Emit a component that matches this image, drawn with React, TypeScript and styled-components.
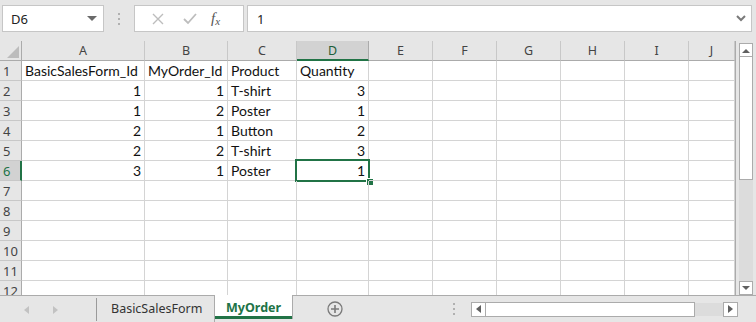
import React from "react"
import styled, { createGlobalStyle } from "styled-components"

const GREEN = "#217346"
const GRID = "#d4d4d4"
const COLS = [22, 123, 83, 69, 72, 64, 64, 64, 64, 64, 46]
const LETTERS = ["A", "B", "C", "D", "E", "F", "G", "H", "I", "J"]

type Cell = string | number | null
const DATA: Cell[][] = [
  ["BasicSalesForm_Id", "MyOrder_Id", "Product", "Quantity"],
  [1, 1, "T-shirt", 3],
  [1, 2, "Poster", 1],
  [2, 1, "Button", 2],
  [2, 2, "T-shirt", 3],
  [3, 1, "Poster", 1],
]

const GlobalStyle = createGlobalStyle`
  html, body {
    margin: 0;
    padding: 0;
    background: #e6e6e6;
    overflow: hidden;
  }
  * { box-sizing: border-box; }
`

const App: React.FC = () => {
  const rows = Array.from({ length: 12 }, (_, i) => DATA[i] || [])

  return (
    <Page>
      <GlobalStyle />
      <FormulaBar>
        <NameBox>
          <span>D6</span>
          <DropCaret />
        </NameBox>
        <Grip>
          <i />
          <i />
          <i />
        </Grip>
        <FxBox>
          <FxIcon>
            <svg width="12" height="12" viewBox="0 0 12 12">
              <path d="M1 1 L11 11 M11 1 L1 11" stroke="#bdbdbd" strokeWidth="1.4" fill="none" />
            </svg>
          </FxIcon>
          <FxIcon>
            <svg width="14" height="12" viewBox="0 0 14 12">
              <path d="M1 6 L5 10 L13 1" stroke="#bdbdbd" strokeWidth="1.8" fill="none" />
            </svg>
          </FxIcon>
          <FxLabel>
            f<sub>x</sub>
          </FxLabel>
        </FxBox>
        <FormulaInput>
          <span>1</span>
          <svg width="10" height="8" viewBox="0 0 10 8">
            <path d="M1 1 L5 5 L9 1" stroke="#7a7a7a" strokeWidth="2" fill="none" />
          </svg>
        </FormulaInput>
      </FormulaBar>

      <SheetArea>
        <Grid>
          <GridRow>
            <Corner>
              <svg width="12" height="12" viewBox="0 0 12 12">
                <path d="M12 0 L12 12 L0 12 Z" fill="#bcbcbc" />
              </svg>
            </Corner>
            {LETTERS.map((l, i) => (
              <ColHead key={l} $active={i === 3}>
                {l}
              </ColHead>
            ))}
          </GridRow>
          {rows.map((r, ri) => (
            <GridRow key={ri}>
              <RowHead $active={ri === 5}>{ri + 1}</RowHead>
              {LETTERS.map((l, ci) => {
                const v = r[ci]
                const isNum = typeof v === "number"
                const selected = ri === 5 && ci === 3
                return (
                  <DataCell key={l} $num={isNum}>
                    {v ?? ""}
                    {selected && (
                      <Selection>
                        <FillHandle />
                      </Selection>
                    )}
                  </DataCell>
                )
              })}
            </GridRow>
          ))}
        </Grid>
        <VScroll>
          <ScrollBtn>
            <svg width="8" height="5" viewBox="0 0 8 5">
              <path d="M0 5 L4 1 L8 5 Z" fill="#606060" />
            </svg>
          </ScrollBtn>
          <VThumb />
          <VTrack />
          <ScrollBtn>
            <svg width="8" height="5" viewBox="0 0 8 5">
              <path d="M0 0 L8 0 L4 4 Z" fill="#606060" />
            </svg>
          </ScrollBtn>
        </VScroll>
      </SheetArea>

      <TabBar>
        <NavArrows>
          <svg width="5" height="8" viewBox="0 0 5 8">
            <path d="M5 0 L5 8 L0 4 Z" fill="#c2c2c2" />
          </svg>
          <svg width="5" height="8" viewBox="0 0 5 8">
            <path d="M0 0 L0 8 L5 4 Z" fill="#c2c2c2" />
          </svg>
        </NavArrows>
        <Tabs>
          <Tab>BasicSalesForm</Tab>
          <Tab $active>MyOrder</Tab>
        </Tabs>
        <AddSheet>
          <svg width="16" height="16" viewBox="0 0 16 16">
            <circle cx="8" cy="8" r="7" stroke="#7a7a7a" strokeWidth="1.3" fill="none" />
            <path d="M8 4 V12 M4 8 H12" stroke="#7a7a7a" strokeWidth="1.6" />
          </svg>
        </AddSheet>
        <TabGrip>
          <i />
          <i />
          <i />
        </TabGrip>
        <HScroll>
          <HBtn>
            <svg width="5" height="8" viewBox="0 0 5 8">
              <path d="M5 0 L5 8 L0 4 Z" fill="#606060" />
            </svg>
          </HBtn>
          <HThumb />
          <HTrack />
          <HBtn>
            <svg width="5" height="8" viewBox="0 0 5 8">
              <path d="M0 0 L0 8 L5 4 Z" fill="#606060" />
            </svg>
          </HBtn>
        </HScroll>
      </TabBar>
    </Page>
  )
}

const Page = styled.div`
  width: 756px;
  height: 322px;
  display: flex;
  flex-direction: column;
  background: #e6e6e6;
  font-family: "Noto Sans", "Open Sans", sans-serif;
  color: #262626;
`

const FormulaBar = styled.div`
  height: 41px;
  display: flex;
  align-items: flex-start;
  padding: 5px 4px 0 2px;
`

const Box = styled.div`
  height: 27px;
  background: #fff;
  border: 1px solid #c6c6c6;
  display: flex;
  align-items: center;
`

const NameBox = styled(Box)`
  width: 102px;
  padding: 0 6px 0 8px;
  justify-content: space-between;
  font-size: 13px;
  color: #222;
`

const DropCaret = styled.span`
  width: 0;
  height: 0;
  border-left: 5px solid transparent;
  border-right: 5px solid transparent;
  border-top: 5px solid #6a6a6a;
`

const Grip = styled.div`
  width: 30px;
  height: 27px;
  display: flex;
  flex-direction: column;
  align-items: center;
  justify-content: center;
  gap: 3px;
  i {
    width: 2px;
    height: 2px;
    background: #b0b0b0;
  }
`

const FxBox = styled(Box)`
  width: 110px;
  padding: 0 6px 0 12px;
  justify-content: space-between;
`

const FxIcon = styled.span`
  width: 22px;
  display: flex;
  justify-content: center;
`

const FxLabel = styled.span`
  font-family: "Liberation Serif", serif;
  font-style: italic;
  font-size: 15px;
  color: #555;
  width: 26px;
  sub {
    font-size: 11px;
    vertical-align: -2px;
  }
`

const FormulaInput = styled(Box)`
  flex: 1;
  margin-left: 3px;
  padding: 0 5px 0 9px;
  justify-content: space-between;
  font-size: 13px;
  color: #222;
`

const SheetArea = styled.div`
  height: 254px;
  display: flex;
  align-items: stretch;
`

const Grid = styled.div`
  width: 736px;
  background: #fff;
  border-right: 1px solid #ababab;
  overflow: hidden;
`

const GridRow = styled.div`
  display: grid;
  grid-template-columns: ${COLS.map(c => `${c}px`).join(" ")};
  height: 20px;
`

const HeadBase = styled.div`
  font-family: "Noto Sans", sans-serif;
  font-size: 12.5px;
  color: #444;
  display: flex;
  align-items: center;
  justify-content: center;
`

const Corner = styled.div`
  background: #e6e6e6;
  border-right: 1px solid #ababab;
  border-bottom: 1px solid #ababab;
  display: flex;
  align-items: flex-end;
  justify-content: flex-end;
  padding: 0 2px 2px 0;
`

const ColHead = styled(HeadBase)<{ $active?: boolean }>`
  background: ${p => (p.$active ? "#d2d2d2" : "#e6e6e6")};
  border-right: 1px solid ${p => (p.$active ? "#ababab" : "#c8c8c8")};
  border-bottom: ${p => (p.$active ? `2px solid ${GREEN}` : "1px solid #ababab")};
  color: ${p => (p.$active ? "#1e5e3a" : "#444")};
  padding-top: ${p => (p.$active ? "1px" : "0")};
`

const RowHead = styled(HeadBase)<{ $active?: boolean }>`
  background: ${p => (p.$active ? "#d2d2d2" : "#e6e6e6")};
  border-right: ${p => (p.$active ? `2px solid ${GREEN}` : "1px solid #ababab")};
  border-bottom: 1px solid #c8c8c8;
  color: ${p => (p.$active ? GREEN : "#444")};
  justify-content: flex-start;
  padding-left: 3px;
  font-size: 13px;
`

const DataCell = styled.div<{ $num?: boolean }>`
  position: relative;
  border-right: 1px solid ${GRID};
  border-bottom: 1px solid ${GRID};
  font-family: "Lato", "Open Sans", sans-serif;
  font-size: 14px;
  color: #111;
  display: flex;
  align-items: flex-end;
  padding: 0 3px 1px 3px;
  white-space: nowrap;
  justify-content: ${p => (p.$num ? "flex-end" : "flex-start")};
`

const Selection = styled.div`
  position: absolute;
  left: -2px;
  top: -2px;
  right: -2px;
  bottom: -2px;
  border: 2px solid ${GREEN};
  pointer-events: none;
`

const FillHandle = styled.div`
  position: absolute;
  right: -5px;
  bottom: -5px;
  width: 7px;
  height: 7px;
  background: ${GREEN};
  border: 1px solid #fff;
  border-right: none;
  border-bottom: none;
`

const VScroll = styled.div`
  width: 14px;
  margin-left: 3px;
  padding-top: 2px;
  display: flex;
  flex-direction: column;
`

const ScrollBtn = styled.div`
  height: 14px;
  background: #fff;
  border: 1px solid #ababab;
  display: flex;
  align-items: center;
  justify-content: center;
`

const VThumb = styled.div`
  height: 123px;
  background: #fff;
  border: 1px solid #ababab;
  border-top: none;
`

const VTrack = styled.div`
  flex: 1;
  background: #dcdcdc;
`

const TabBar = styled.div`
  height: 27px;
  display: flex;
  align-items: stretch;
  border-top: 1px solid #ababab;
`

const NavArrows = styled.div`
  width: 97px;
  display: flex;
  align-items: center;
  padding-left: 24px;
  gap: 24px;
  border-right: 1px solid #9a9a9a;
  margin: 2px 0 1px;
`

const Tabs = styled.div`
  display: flex;
  align-items: stretch;
  margin-top: -1px;
`

const Tab = styled.div<{ $active?: boolean }>`
  padding: 0 ${p => (p.$active ? "11px" : "14px")};
  display: flex;
  align-items: center;
  font-size: 12.5px;
  color: ${p => (p.$active ? GREEN : "#333")};
  font-weight: ${p => (p.$active ? 700 : 400)};
  background: ${p => (p.$active ? "#fff" : "transparent")};
  border-right: 1px solid #ababab;
  box-shadow: ${p => (p.$active ? `inset 0 -3px 0 ${GREEN}` : "none")};
  margin-bottom: ${p => (p.$active ? "3px" : "0")};
  width: ${p => (p.$active ? "78px" : "118px")};
`

const AddSheet = styled.div`
  width: 84px;
  display: flex;
  align-items: center;
  justify-content: center;
`

const TabGrip = styled(Grip)`
  width: 36px;
  height: auto;
  margin-left: 59px;
`

const HScroll = styled.div`
  display: flex;
  align-items: center;
  margin-left: -1px;
`

const HBtn = styled.div`
  width: 15px;
  height: 15px;
  background: #fff;
  border: 1px solid #ababab;
  display: flex;
  align-items: center;
  justify-content: center;
`

const HThumb = styled.div`
  width: 209px;
  height: 15px;
  background: #fff;
  border: 1px solid #ababab;
  border-left: none;
`

const HTrack = styled.div`
  width: 28px;
  height: 13px;
  background: #dcdcdc;
`

export default App
